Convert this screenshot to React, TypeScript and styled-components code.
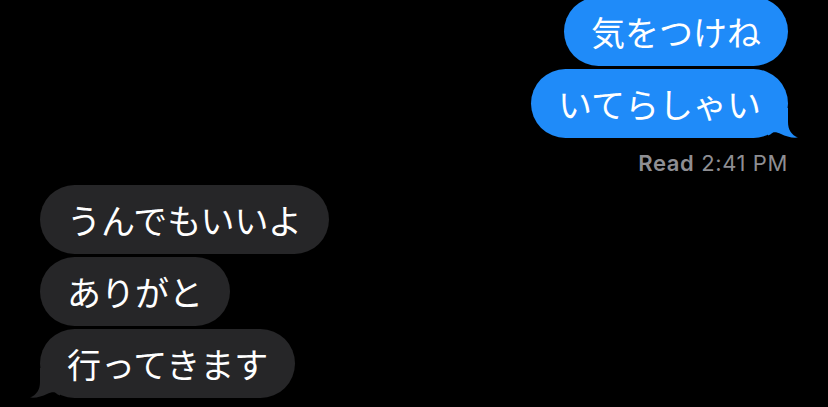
import React from 'react';
import styled, { createGlobalStyle } from 'styled-components';

const GlobalStyle = createGlobalStyle`
    html, body {
        margin: 0;
        padding: 0;
        background: #000;
    }
`;

type Side = 'left' | 'right';

const BLUE = '#1f8bf9';
const GRAY = '#262628';

const Screen = styled.div`
    width: 828px;
    height: 407px;
    overflow: hidden;
    background: #000;
    box-sizing: border-box;
    padding: 0 40px;
    display: flex;
    flex-direction: column;
`;

const Group = styled.div<{ $side: Side }>`
    display: flex;
    flex-direction: column;
    gap: 3px;
    align-items: ${({ $side }) => ($side === 'right' ? 'flex-end' : 'flex-start')};
`;

const SentGroup = styled(Group)`
    margin-top: -3px;
`;

const ReceivedGroup = styled(Group)`
    margin-top: 9px;
`;

const Bubble = styled.div<{ $side: Side }>`
    position: relative;
    height: 69px;
    box-sizing: border-box;
    padding: 0 27px;
    border-radius: 35px;
    display: flex;
    align-items: center;
    font-family: 'Noto Sans CJK JP', sans-serif;
    font-weight: 400;
    font-size: 34px;
    color: #fff;
    white-space: nowrap;
    background: ${({ $side }) => ($side === 'right' ? BLUE : GRAY)};
`;

const TailSvg = styled.svg<{ $side: Side }>`
    position: absolute;
    bottom: 0;
    width: 30px;
    height: 30px;
    ${({ $side }) =>
        $side === 'right' ? 'right: -10px;' : 'left: -10px; transform: scaleX(-1);'}
`;

const Tail = ({ side }: { side: Side }) => (
    <TailSvg $side={side} viewBox="0 0 30 30">
        <path
            d="M0 0 H20 V14 C20 22 23.5 27 30 29.5 C24 30.2 18 28.5 13 26 C10 24.5 7 24 5 24.5 C3 26 1.5 27 0 27.5 Z"
            fill={side === 'right' ? BLUE : GRAY}
        />
    </TailSvg>
);

const Receipt = styled.div`
    margin-top: 12px;
    align-self: flex-end;
    font-family: Inter, 'Liberation Sans', sans-serif;
    font-size: 22px;
    line-height: 26px;
    color: #8e8e93;
    letter-spacing: 0.6px;

    & > b {
        font-weight: 600;
    }
`;

const Message = ({ side, text, tail }: { side: Side; text: string; tail?: boolean }) => (
    <Bubble $side={side}>
        {text}
        {tail && <Tail side={side} />}
    </Bubble>
);

export default function App() {
    return (
        <>
            <GlobalStyle />
            <Screen>
                <SentGroup $side="right">
                    <Message side="right" text="気をつけね" />
                    <Message side="right" text="いてらしゃい" tail />
                </SentGroup>
                <Receipt>
                    <b>Read</b> 2:41 PM
                </Receipt>
                <ReceivedGroup $side="left">
                    <Message side="left" text="うんでもいいよ" />
                    <Message side="left" text="ありがと" />
                    <Message side="left" text="行ってきます" tail />
                </ReceivedGroup>
            </Screen>
        </>
    );
}
